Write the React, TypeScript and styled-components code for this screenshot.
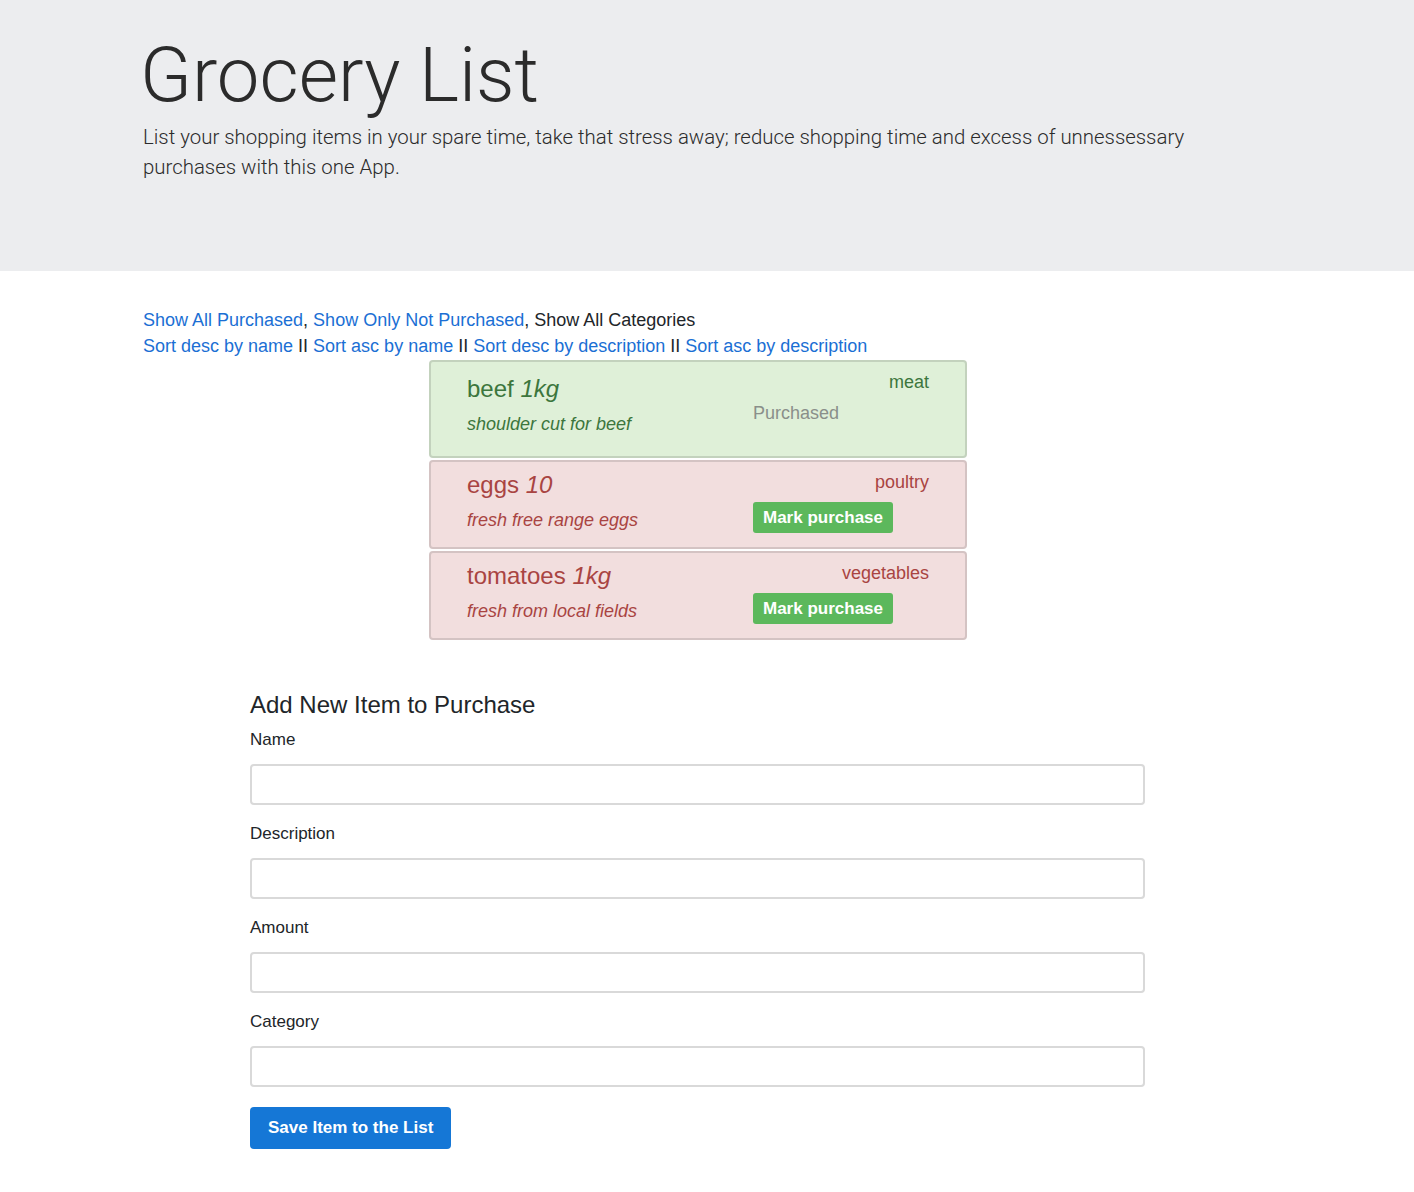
import React from 'react'
import styled, { createGlobalStyle } from 'styled-components'

type Item = {
  name: string
  amount: string
  description: string
  category: string
  purchased: boolean
}

const items: Item[] = [
  { name: 'beef', amount: '1kg', description: 'shoulder cut for beef', category: 'meat', purchased: true },
  { name: 'eggs', amount: '10', description: 'fresh free range eggs', category: 'poultry', purchased: false },
  { name: 'tomatoes', amount: '1kg', description: 'fresh from local fields', category: 'vegetables', purchased: false },
]

const fields = ['Name', 'Description', 'Amount', 'Category']

const sorts = ['Sort desc by name', 'Sort asc by name', 'Sort desc by description', 'Sort asc by description']

export default function App() {
  return (
    <>
      <GlobalStyle />
      <Jumbotron>
        <Container>
          <Title>Grocery List</Title>
          <Lead>
            List your shopping items in your spare time, take that stress away; reduce shopping time and excess of
            unnessessary purchases with this one App.
          </Lead>
        </Container>
      </Jumbotron>
      <Container>
        <FilterRow>
          <Link href="#">Show All Purchased</Link>, <Link href="#">Show Only Not Purchased</Link>, Show All Categories
        </FilterRow>
        <FilterRow>
          {sorts.map((s, i) => (
            <React.Fragment key={s}>
              {i > 0 && ' II '}
              <Link href="#">{s}</Link>
            </React.Fragment>
          ))}
        </FilterRow>
        <List>
          {items.map(item => (
            <Card key={item.name} $done={item.purchased}>
              <Info>
                <ItemName>
                  {item.name} <Amount>{item.amount}</Amount>
                </ItemName>
                <Desc>{item.description}</Desc>
              </Info>
              <Side>
                <CategoryName>{item.category}</CategoryName>
                {item.purchased ? <Status>Purchased</Status> : <MarkButton>Mark purchase</MarkButton>}
              </Side>
            </Card>
          ))}
        </List>
        <Form>
          <FormTitle>Add New Item to Purchase</FormTitle>
          {fields.map(f => (
            <Group key={f}>
              <Label>{f}</Label>
              <Input type="text" />
            </Group>
          ))}
          <SaveButton type="button">Save Item to the List</SaveButton>
        </Form>
      </Container>
    </>
  )
}

const GlobalStyle = createGlobalStyle`
  body {
    margin: 0;
    font-family: "Liberation Sans", Arial, sans-serif;
    font-size: 17.6px;
    line-height: 1.5;
    color: #212529;
    background: #fff;
  }
  * { box-sizing: border-box; }
`

const Jumbotron = styled.div`
  background: #ecedef;
  height: 271px;
  padding-top: 30px;
`

const Container = styled.div`
  width: 1110px;
  margin-left: 143px;
`

const Title = styled.h1`
  margin: 0 0 1px -3px;
  font-family: Roboto, "Liberation Sans", sans-serif;
  font-size: 76px;
  font-weight: 300;
  line-height: 1.2;
  color: #2b2b2b;
`

const Lead = styled.p`
  margin: 0;
  font-family: Roboto, "Liberation Sans", sans-serif;
  font-size: 20.4px;
  font-weight: 300;
  line-height: 30px;
  color: #2b2b2b;
  width: 1070px;
`

const FilterRow = styled.div`
  font-size: 18px;
  line-height: 26px;
  &:first-of-type {
    margin-top: 36px;
  }
`

const Link = styled.a`
  color: #1b6fd4;
  text-decoration: none;
`

const List = styled.div`
  width: 538px;
  margin: 1px auto 0;
  display: flex;
  flex-direction: column;
  gap: 2px;
`

const Card = styled.div<{ $done: boolean }>`
  display: flex;
  align-items: center;
  padding: 7px 36px 14px 36px;
  border: 2px solid rgba(0, 0, 0, 0.12);
  border-radius: 4px;
  background: ${p => (p.$done ? '#dff0d8' : '#f2dede')};
  color: ${p => (p.$done ? '#3c763d' : '#a94442')};
`

const Info = styled.div`
  flex: 1;
  padding-top: 1px;
`

const ItemName = styled.div`
  font-size: 24px;
  line-height: 28px;
`

const Amount = styled.i`
  font-style: italic;
`

const Desc = styled.div`
  margin-top: 8px;
  font-style: italic;
  font-size: 18px;
  line-height: 26px;
`

const Side = styled.div`
  width: 176px;
  align-self: stretch;
  display: flex;
  flex-direction: column;
  align-items: flex-start;
`

const CategoryName = styled.div`
  align-self: flex-end;
  font-size: 18px;
  line-height: 26px;
`

const Status = styled.div`
  margin-top: 5px;
  margin-bottom: 16px;
  font-size: 18px;
  line-height: 26px;
  color: #8a8f8a;
`

const MarkButton = styled.button`
  margin-top: 7px;
  height: 31px;
  padding: 0 10px;
  border: none;
  border-radius: 3px;
  background: #5cb85c;
  color: #fff;
  font-family: "Liberation Sans", Arial, sans-serif;
  font-size: 17px;
  font-weight: 700;
  cursor: pointer;
`

const Form = styled.form`
  width: 895px;
  margin: 50px 0 40px 107px;
`

const FormTitle = styled.h4`
  margin: 0 0 8px;
  font-size: 24px;
  font-weight: 400;
  line-height: 30px;
  color: #212529;
`

const Group = styled.div`
  display: flex;
  flex-direction: column;
  margin-bottom: 17px;
`

const Label = styled.label`
  font-size: 17px;
  line-height: 24px;
  margin-bottom: 12px;
`

const Input = styled.input`
  height: 41px;
  border: 2px solid #d9d9d9;
  border-radius: 4px;
  padding: 6px 12px;
  font-size: 17px;
  font-family: "Liberation Sans", Arial, sans-serif;
`

const SaveButton = styled.button`
  margin-top: 3px;
  height: 42px;
  padding: 0 18px;
  border: none;
  border-radius: 4px;
  background: #1577d6;
  color: #fff;
  font-family: "Liberation Sans", Arial, sans-serif;
  font-size: 17px;
  font-weight: 700;
  cursor: pointer;
`
